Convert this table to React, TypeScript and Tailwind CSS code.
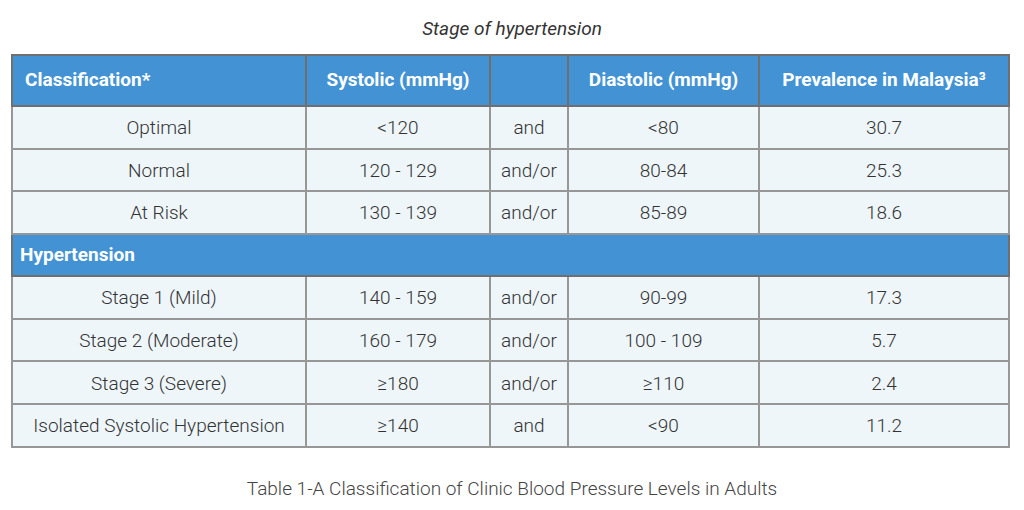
const rows = [
  { name: 'Optimal', sys: '<120', op: 'and', dia: '<80', prev: '30.7' },
  { name: 'Normal', sys: '120 - 129', op: 'and/or', dia: '80-84', prev: '25.3' },
  { name: 'At Risk', sys: '130 - 139', op: 'and/or', dia: '85-89', prev: '18.6' },
]

const hyperRows = [
  { name: 'Stage 1 (Mild)', sys: '140 - 159', op: 'and/or', dia: '90-99', prev: '17.3' },
  { name: 'Stage 2 (Moderate)', sys: '160 - 179', op: 'and/or', dia: '100 - 109', prev: '5.7' },
  { name: 'Stage 3 (Severe)', sys: '≥180', op: 'and/or', dia: '≥110', prev: '2.4' },
  { name: 'Isolated Systolic Hypertension', sys: '≥140', op: 'and', dia: '<90', prev: '11.2' },
]

type Row = (typeof rows)[number]

function BodyRow({ row }: { row: Row }) {
  const cell = 'border-2 border-[#979797] text-center h-[42.7px] p-0 pt-[2px]'
  return (
    <tr className="bg-[#eef6fa]">
      <td className={cell}>{row.name}</td>
      <td className={cell}>{row.sys}</td>
      <td className={cell}>{row.op}</td>
      <td className={cell}>{row.dia}</td>
      <td className={cell}>{row.prev}</td>
    </tr>
  )
}

export default function App() {
  const head = 'border-2 border-[#6f6f6f] font-bold text-white text-[19px] h-[51px] p-0'
  return (
    <div
      className="w-[1024px] h-[510px] bg-white text-[#333] text-[19px] font-light pt-[17px]"
      style={{ fontFamily: 'Roboto, "Liberation Sans", sans-serif' }}
    >
      <p className="text-center italic font-normal text-[19px] leading-[24px] mb-[13px]">Stage of hypertension</p>

      <table className="ml-[11px] w-[997px] border-collapse table-fixed border-2 border-[#777]">
        <colgroup>
          <col className="w-[294px]" />
          <col className="w-[184px]" />
          <col className="w-[78px]" />
          <col className="w-[191px]" />
          <col className="w-[250px]" />
        </colgroup>
        <thead>
          <tr className="bg-[#4393d4]">
            <th className={`${head} text-left pl-[12px]`}>Classification*</th>
            <th className={`${head} text-center`}>Systolic (mmHg)</th>
            <th className={head}></th>
            <th className={`${head} text-center`}>Diastolic (mmHg)</th>
            <th className={`${head} text-center`}>Prevalence in Malaysia³</th>
          </tr>
        </thead>
        <tbody>
          {rows.map((r) => (
            <BodyRow key={r.name} row={r} />
          ))}
          <tr className="bg-[#4393d4]">
            <td colSpan={5} className="border-2 border-[#6f6f6f] h-[42px] p-0 pl-[7px] font-bold text-[19px] text-white">
              Hypertension
            </td>
          </tr>
          {hyperRows.map((r) => (
            <BodyRow key={r.name} row={r} />
          ))}
        </tbody>
      </table>

      <p className="text-center text-[19px] leading-[24px] mt-[29px] text-[#444]">
        Table 1-A Classification of Clinic Blood Pressure Levels in Adults
      </p>
    </div>
  )
}
